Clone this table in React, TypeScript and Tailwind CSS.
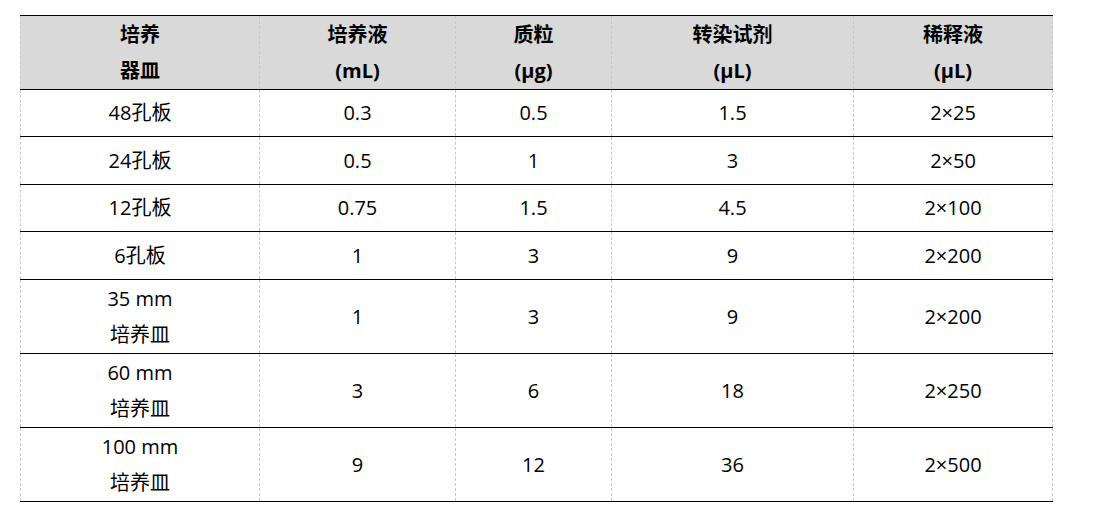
import React from "react";

const cols = ["w-[239px]", "w-[196px]", "w-[156px]", "w-[242px]", "w-[200px]"];

const header: string[][] = [
  ["培养", "器皿"],
  ["培养液", "(mL)"],
  ["质粒", "(μg)"],
  ["转染试剂", "(μL)"],
  ["稀释液", "(μL)"],
];

const rows: { h: string; cells: string[][] }[] = [
  { h: "h-[47px]", cells: [["48孔板"], ["0.3"], ["0.5"], ["1.5"], ["2×25"]] },
  { h: "h-[48px]", cells: [["24孔板"], ["0.5"], ["1"], ["3"], ["2×50"]] },
  { h: "h-[47px]", cells: [["12孔板"], ["0.75"], ["1.5"], ["4.5"], ["2×100"]] },
  { h: "h-[48px]", cells: [["6孔板"], ["1"], ["3"], ["9"], ["2×200"]] },
  { h: "h-[74px]", cells: [["35 mm", "培养皿"], ["1"], ["3"], ["9"], ["2×200"]] },
  { h: "h-[74px]", cells: [["60 mm", "培养皿"], ["3"], ["6"], ["18"], ["2×250"]] },
  { h: "h-[74px]", cells: [["100 mm", "培养皿"], ["9"], ["12"], ["36"], ["2×500"]] },
];

function Cell({ lines, width, last }: { lines: string[]; width: string; last: boolean }) {
  return (
    <div
      className={`${width} flex flex-col items-center justify-center border-l border-dashed border-l-[#c8c8c8] ${
        last ? "border-r border-r-[#c8c8c8]" : ""
      }`}
    >
      {lines.map((t, i) => (
        <div key={i} className="leading-[36px] whitespace-pre">
          {t}
        </div>
      ))}
    </div>
  );
}

export default function App() {
  return (
    <div
      className="w-[1097px] h-[521px] bg-white pt-[15px] pl-[20px] text-[20px] text-black"
      style={{ fontFamily: '"Open Sans", "Noto Sans CJK SC", sans-serif' }}
    >
      <div className="w-fit border-t border-black">
        <div className="flex h-[74px] bg-[#d9d9d9] border-b border-black font-bold">
          {header.map((c, i) => (
            <Cell key={i} lines={c} width={cols[i]} last={i === 4} />
          ))}
        </div>
        {rows.map((r, ri) => (
          <div key={ri} className={`flex ${r.h} border-b border-black`}>
            {r.cells.map((c, i) => (
              <Cell key={i} lines={c} width={cols[i]} last={i === 4} />
            ))}
          </div>
        ))}
      </div>
    </div>
  );
}
